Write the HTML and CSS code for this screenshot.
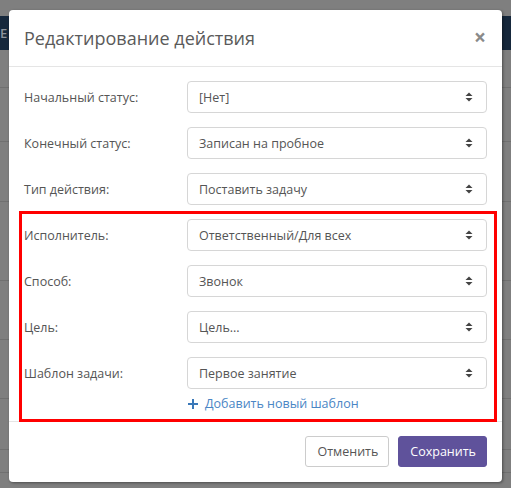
FILE: index.html
```html
<!DOCTYPE html>
<html lang="ru">
<head>
    <meta charset="UTF-8">
    <title>Редактирование действия</title>
    <link rel="stylesheet" href="styles.css">
</head>
<body>
    <div class="page">
        <div class="navbar"><span class="nav-text">E</span></div>
        <div class="bg-row r1"></div>
        <div class="bg-row r2"></div>
        <div class="bg-row r3"></div>
        <div class="bg-row r4"></div>
        <div class="bg-row r5"></div>
        <div class="bg-row r6"></div>
        <div class="bg-row r7"></div>
        <div class="bg-row r8"></div>
    </div>

    <div class="modal">
        <div class="modal-header">
            <h4 class="modal-title">Редактирование действия</h4>
            <span class="close">&times;</span>
        </div>
        <div class="modal-body">
            <div class="form-row">
                <label>Начальный статус:</label>
                <div class="select"><span>[Нет]</span><svg class="caret" width="8" height="10" viewBox="0 0 8 10"><polygon points="0.5,4 4,0.5 7.5,4"/><polygon points="0.5,6 4,9.5 7.5,6"/></svg></div>
            </div>
            <div class="form-row">
                <label>Конечный статус:</label>
                <div class="select"><span>Записан на пробное</span><svg class="caret" width="8" height="10" viewBox="0 0 8 10"><polygon points="0.5,4 4,0.5 7.5,4"/><polygon points="0.5,6 4,9.5 7.5,6"/></svg></div>
            </div>
            <div class="form-row">
                <label>Тип действия:</label>
                <div class="select"><span>Поставить задачу</span><svg class="caret" width="8" height="10" viewBox="0 0 8 10"><polygon points="0.5,4 4,0.5 7.5,4"/><polygon points="0.5,6 4,9.5 7.5,6"/></svg></div>
            </div>
            <div class="form-row">
                <label>Исполнитель:</label>
                <div class="select"><span>Ответственный/Для всех</span><svg class="caret" width="8" height="10" viewBox="0 0 8 10"><polygon points="0.5,4 4,0.5 7.5,4"/><polygon points="0.5,6 4,9.5 7.5,6"/></svg></div>
            </div>
            <div class="form-row">
                <label>Способ:</label>
                <div class="select"><span>Звонок</span><svg class="caret" width="8" height="10" viewBox="0 0 8 10"><polygon points="0.5,4 4,0.5 7.5,4"/><polygon points="0.5,6 4,9.5 7.5,6"/></svg></div>
            </div>
            <div class="form-row">
                <label>Цель:</label>
                <div class="select"><span>Цель...</span><svg class="caret" width="8" height="10" viewBox="0 0 8 10"><polygon points="0.5,4 4,0.5 7.5,4"/><polygon points="0.5,6 4,9.5 7.5,6"/></svg></div>
            </div>
            <div class="form-row">
                <label>Шаблон задачи:</label>
                <div class="select"><span>Первое занятие</span><svg class="caret" width="8" height="10" viewBox="0 0 8 10"><polygon points="0.5,4 4,0.5 7.5,4"/><polygon points="0.5,6 4,9.5 7.5,6"/></svg></div>
            </div>
            <div class="add-row">
                <a class="add-link" href="#"><svg class="plus" width="10" height="10" viewBox="0 0 10 10"><rect x="4" y="0" width="2" height="10"/><rect x="0" y="4" width="10" height="2"/></svg>Добавить новый шаблон</a>
            </div>
        </div>
        <div class="modal-footer">
            <button class="btn btn-default">Отменить</button>
            <button class="btn btn-primary">Сохранить</button>
        </div>
        <div class="highlight"></div>
    </div>
</body>
</html>
```

FILE: styles.css
```css
body {
    margin: 0;
    background-color: #7f7f7f;
    font-family: "Open Sans", "Liberation Sans", sans-serif;
    font-size: 12.5px;
    color: #555;
}
.page {
    height: 488px;
    overflow: hidden;
}
.navbar {
    margin-top: 16px;
    height: 34px;
    background-color: #16283c;
    line-height: 34px;
}
.nav-text {
    margin-left: 0;
    color: #8c939b;
    font-size: 13px;
    font-weight: 600;
}
.bg-row {
    border-bottom: 1px solid #707070;
}
.r1 { height: 37px; }
.r2 { height: 53px; }
.r3 { height: 59px; }
.r4 { height: 78px; }
.r5 { height: 58px; }
.r6 { height: 58px; }
.r7 { height: 50px; }
.r8 { height: 22px; }

.modal {
    position: absolute;
    top: 10px;
    left: 9px;
    width: 493px;
    background-color: #fff;
    border-radius: 4px;
    box-shadow: 1px 1px 3px rgba(0,0,0,0.4);
}
.modal-header {
    display: flex;
    align-items: center;
    justify-content: space-between;
    height: 56px;
    padding: 0 16px 0 15px;
    border-bottom: 1px solid #e5e5e5;
}
.modal-title {
    margin: 0;
    font-size: 18px;
    font-weight: normal;
    color: #5a5a5a;
}
.close {
    font-size: 21px;
    font-weight: bold;
    color: #8a8a8a;
    margin-top: -3px;
}
.modal-body {
    display: flex;
    flex-direction: column;
    gap: 14px;
    padding: 14px 15px 7px 15px;
}
.form-row {
    display: flex;
    align-items: center;
}
.form-row label {
    width: 163px;
    flex-shrink: 0;
    color: #555;
}
.select {
    flex: 1;
    display: flex;
    align-items: center;
    justify-content: space-between;
    height: 30px;
    padding: 0 13px 0 11px;
    border: 1px solid #d6d6d6;
    border-radius: 4px;
    color: #555;
}
.caret {
    fill: #444;
}
.add-row {
    margin-top: -9px;
    padding-left: 163px;
    height: 20px;
    line-height: 20px;
}
.add-link {
    color: #4a86c5;
    text-decoration: none;
}
.plus {
    fill: #3a78b8;
    margin: 0 7px 0 1px;
    vertical-align: -1px;
}
.modal-footer {
    display: flex;
    justify-content: flex-end;
    gap: 9px;
    padding: 14px 15px 15px 15px;
    border-top: 1px solid #e5e5e5;
}
.btn {
    height: 31px;
    padding: 0 10px 0 11px;
    font-family: "Open Sans", "Liberation Sans", sans-serif;
    font-size: 12.5px;
    border-radius: 3px;
    cursor: pointer;
}
.btn-default {
    background-color: #fff;
    border: 1px solid #ccc;
    color: #555;
}
.btn-primary {
    background-color: #5f529b;
    border: 1px solid #5f529b;
    color: #fff;
}
.highlight {
    position: absolute;
    left: 10px;
    top: 201px;
    width: 472px;
    height: 205px;
    border: 3px solid #ff0000;
    pointer-events: none;
}
```
